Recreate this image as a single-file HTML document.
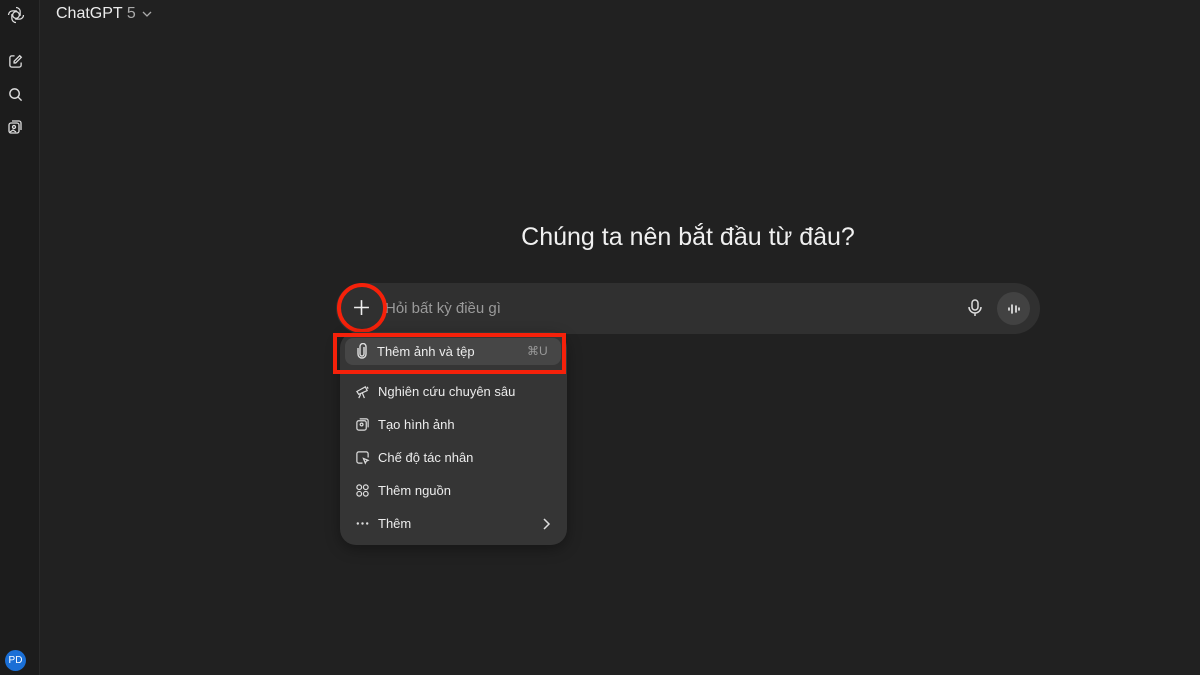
<!DOCTYPE html><html><head><meta charset="utf-8"><style>
body{margin:0;width:1200px;height:675px;background:#212121;font-family:"Liberation Sans",sans-serif;color:#ececec;position:relative;overflow:hidden}
.sb{position:absolute;left:0;top:0;width:39px;height:675px;background:#1c1c1c;border-right:1px solid #2a2a2a}
.ab{position:absolute}
svg{display:block}
.mi{position:absolute;left:355px;font-size:13px;color:#ececec;display:flex;align-items:center;gap:8px}
</style></head><body>
<div class="sb">
<svg class="ab" style="left:6px;top:5px" width="20" height="20" viewBox="0 0 24 24" fill="none" stroke="#ddd" stroke-width="1.5"><circle cx="12" cy="12" r="4"/><path d="M12 3a5 5 0 0 1 5 5v5M21 12a5 5 0 0 1-5 5H11M12 21a5 5 0 0 1-5-5v-5M3 12a5 5 0 0 1 5-5h5"/></svg>
<svg class="ab" style="left:8px;top:54px" width="15" height="15" viewBox="0 0 16 16" fill="none" stroke="#ddd" stroke-width="1.4"><path d="M7 2H4a2 2 0 0 0-2 2v8a2 2 0 0 0 2 2h8a2 2 0 0 0 2-2V9"/><path d="M12.5 1.8l1.7 1.7-6 6H6.5V7.8z"/></svg>
<svg class="ab" style="left:8px;top:87px" width="15" height="15" viewBox="0 0 16 16" fill="none" stroke="#ddd" stroke-width="1.5"><circle cx="7" cy="7" r="5"/><path d="M11 11l3.5 3.5"/></svg>
<svg class="ab" style="left:7px;top:119px" width="16" height="16" viewBox="0 0 16 16" fill="none" stroke="#ddd" stroke-width="1.3"><rect x="2" y="4" width="10" height="10" rx="2"/><path d="M5 2h7a2 2 0 0 1 2 2v7"/><circle cx="7" cy="8" r="1.5"/><path d="M3 13l3-2 3 2"/></svg>
<div class="ab" style="left:5px;top:650px;width:21px;height:21px;border-radius:50%;background:#1a6fd6;color:#fff;font-size:10px;line-height:21px;text-align:center">PD</div>
</div>
<div class="ab" style="left:56px;top:5px;font-size:16px;color:#ececec">ChatGPT <span style="color:#aaa">5</span></div>
<svg class="ab" style="left:142px;top:11px" width="10" height="7" viewBox="0 0 10 7" fill="none" stroke="#aaa" stroke-width="1.3"><path d="M1 1l4 4 4-4"/></svg>
<div class="ab" style="left:0;width:1376px;top:223px;text-align:center;font-size:25px;color:#f0f0f0">Chúng ta nên bắt đầu từ đâu?</div>
<div class="ab" style="left:336px;top:283px;width:704px;height:51px;border-radius:26px;background:#303030"></div>
<div class="ab" style="left:385px;top:300px;font-size:15px;color:#9a9a9a">Hỏi bất kỳ điều gì</div>
<svg class="ab" style="left:353px;top:299px" width="17" height="17" viewBox="0 0 16 16" stroke="#eee" stroke-width="1.5"><path d="M8 1v14M1 8h14"/></svg>
<div class="ab" style="left:337px;top:283px;width:42px;height:42px;border:4px solid #f5210a;border-radius:50%"></div>
<svg class="ab" style="left:967px;top:299px" width="16" height="18" viewBox="0 0 16 18" fill="none" stroke="#ddd" stroke-width="1.5"><rect x="5" y="1" width="6" height="10" rx="3"/><path d="M2 8a6 6 0 0 0 12 0M8 14v3"/></svg>
<div class="ab" style="left:997px;top:292px;width:33px;height:33px;border-radius:50%;background:#424242"></div>
<svg class="ab" style="left:1006px;top:301px" width="16" height="16" viewBox="0 0 16 16" stroke="#eee" stroke-width="1.6" stroke-linecap="round"><path d="M3 7v2M6 4v8M10 5v6M13 7v2"/></svg>
<div class="ab" style="left:340px;top:332px;width:227px;height:213px;border-radius:16px;background:#353535;box-shadow:0 4px 14px rgba(0,0,0,.35)"></div>
<div class="ab" style="left:345px;top:338px;width:216px;height:27px;border-radius:8px;background:#464646"></div>
<div class="ab" style="left:333px;top:333px;width:225px;height:33px;border:4px solid #f5210a"></div>
<div class="mi" style="top:343px"><svg width="14" height="16" viewBox="0 0 14 16" fill="none" stroke="#ddd" stroke-width="1.4"><path d="M9 4v7a2 2 0 0 1-4 0V3.5a3 3 0 0 1 6 0V11a4 4 0 0 1-8 0V5"/></svg>Thêm ảnh và tệp</div>
<div class="ab" style="left:527px;top:344px;font-size:12px;color:#999">⌘U</div>
<div class="mi" style="top:384px"><svg width="15" height="15" viewBox="0 0 16 16" fill="none" stroke="#ddd" stroke-width="1.3"><path d="M2 8l9-5 2 4-9 4zM6 11l-2 4M8 10l2 5M13 3l1 2"/></svg>Nghiên cứu chuyên sâu</div>
<div class="mi" style="top:417px"><svg width="15" height="15" viewBox="0 0 16 16" fill="none" stroke="#ddd" stroke-width="1.3"><rect x="2" y="4" width="10" height="10" rx="2"/><path d="M5 2h7a2 2 0 0 1 2 2v7"/><circle cx="7" cy="8" r="1.5"/></svg>Tạo hình ảnh</div>
<div class="mi" style="top:450px"><svg width="15" height="15" viewBox="0 0 16 16" fill="none" stroke="#ddd" stroke-width="1.3"><path d="M8 14H4a2 2 0 0 1-2-2V4a2 2 0 0 1 2-2h8a2 2 0 0 1 2 2v4"/><path d="M9 9l5 2-2 1-1 2z"/></svg>Chế độ tác nhân</div>
<div class="mi" style="top:483px"><svg width="15" height="15" viewBox="0 0 16 16" fill="none" stroke="#ddd" stroke-width="1.3"><circle cx="4.5" cy="4.5" r="2.5"/><circle cx="11.5" cy="4.5" r="2.5"/><circle cx="4.5" cy="11.5" r="2.5"/><circle cx="11.5" cy="11.5" r="2.5"/></svg>Thêm nguồn</div>
<div class="mi" style="top:516px"><svg width="15" height="15" viewBox="0 0 16 16" fill="#ddd"><circle cx="3" cy="8" r="1.3"/><circle cx="8" cy="8" r="1.3"/><circle cx="13" cy="8" r="1.3"/></svg>Thêm</div>
<svg class="ab" style="left:542px;top:518px" width="9" height="12" viewBox="0 0 9 12" fill="none" stroke="#ddd" stroke-width="1.5"><path d="M2 1l5 5-5 5"/></svg>
</body></html>
